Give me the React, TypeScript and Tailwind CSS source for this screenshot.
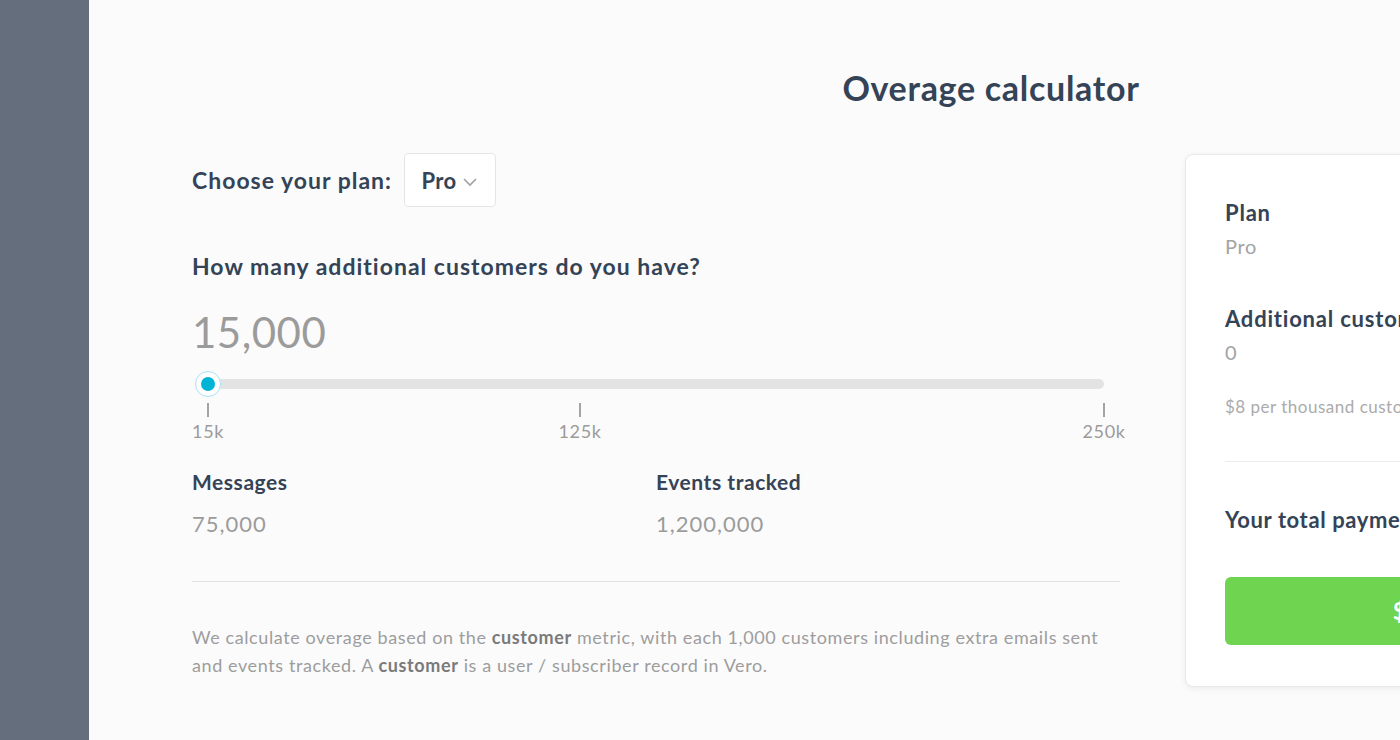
import React from "react";

const font = { fontFamily: "Lato, 'Noto Sans', sans-serif" };

export default function App() {
  return (
    <div className="flex h-[740px] w-[1400px] overflow-hidden bg-[#fbfbfc]" style={font}>
      <div className="w-[89px] shrink-0 bg-[#646e7d]" />
      <div className="flex-1 overflow-hidden pl-[103px]">
        <div className="w-[1598px]">
          <h1 className="pt-[68px] text-center text-[34px] font-bold leading-[40px] tracking-[0.7px] text-[#344356]">
            Overage calculator
          </h1>
          <div className="mt-[45px] flex gap-[65px]">
            <div className="w-[928px] shrink-0">
              <div className="flex items-center gap-[12px]">
                <span className="text-[23px] font-bold tracking-[1px] text-[#344356]">Choose your plan:</span>
                <div className="flex h-[54px] w-[92px] items-center justify-center gap-[6px] rounded-[4px] border border-[#e4e5e7] bg-white">
                  <span className="text-[22px] font-bold tracking-[0.3px] text-[#344356]">Pro</span>
                  <svg width="16" height="10" viewBox="0 0 16 10" className="mt-[4px]">
                    <path d="M2 2 L8 8 L14 2" fill="none" stroke="#a0a0a0" strokeWidth="1.6" />
                  </svg>
                </div>
              </div>
              <div className="mt-[45px] text-[23px] font-bold leading-[28px] tracking-[1px] text-[#344356]">
                How many additional customers do you have?
              </div>
              <div className="mt-[28px] text-[42px] font-normal leading-[48px] tracking-[0.5px] text-[#9b9b9b]">
                15,000
              </div>
              <div className="relative mt-[13px] h-[70px] w-[928px]">
                <div className="absolute left-[6px] top-[10px] h-[10px] w-[906px] rounded-full bg-[#e3e3e3]" />
                <div className="absolute left-[3px] top-[2px] flex h-[26px] w-[26px] items-center justify-center rounded-full border border-[#a9e3ee] bg-white">
                  <div className="h-[14px] w-[14px] rounded-full bg-[#00b4d6]" />
                </div>
                <div className="absolute left-[15px] top-[34px] h-[14px] w-[2px] bg-[#a4a4a4]" />
                <div className="absolute left-[387px] top-[34px] h-[14px] w-[2px] bg-[#a4a4a4]" />
                <div className="absolute left-[911px] top-[34px] h-[14px] w-[2px] bg-[#a4a4a4]" />
                <span className="absolute left-[16px] top-[52px] -translate-x-1/2 text-[18px] leading-[20px] tracking-[0.6px] text-[#9b9b9b]">15k</span>
                <span className="absolute left-[388px] top-[52px] -translate-x-1/2 text-[18px] leading-[20px] tracking-[0.6px] text-[#9b9b9b]">125k</span>
                <span className="absolute left-[912px] top-[52px] -translate-x-1/2 text-[18px] leading-[20px] tracking-[0.6px] text-[#9b9b9b]">250k</span>
              </div>
              <div className="mt-[31px] grid grid-cols-2">
                <div>
                  <div className="text-[21px] font-bold leading-[24px] tracking-[0.55px] text-[#344356]">Messages</div>
                  <div className="mt-[17px] text-[22px] leading-[26px] tracking-[1px] text-[#9b9b9b]">75,000</div>
                </div>
                <div>
                  <div className="text-[21px] font-bold leading-[24px] tracking-[0.55px] text-[#344356]">Events tracked</div>
                  <div className="mt-[17px] text-[22px] leading-[26px] tracking-[1px] text-[#9b9b9b]">1,200,000</div>
                </div>
              </div>
              <div className="mt-[44px] h-px bg-[#e2e2e2]" />
              <p className="mt-[41px] text-[18px] leading-[28px] tracking-[0.6px] text-[#9d9d9d]">
                We calculate overage based on the <b className="font-bold text-[#7a7a7a]">customer</b> metric, with each 1,000 customers including extra emails sent and events tracked. A <b className="font-bold text-[#7a7a7a]">customer</b> is a user / subscriber record in Vero.
              </p>
            </div>
            <div className="mt-[1px] h-[533px] w-[605px] shrink-0 rounded-[8px] border border-[#e8e8ea] bg-white px-[39px] pt-[44px] shadow-[0_2px_6px_rgba(0,0,0,0.06)]">
              <div className="text-[22px] font-bold leading-[28px] tracking-[0.8px] text-[#344356]">Plan</div>
              <div className="mt-[6px] text-[20px] leading-[26px] tracking-[0.6px] text-[#a3a3a3]">Pro</div>
              <div className="mt-[46px] text-[22px] font-bold leading-[28px] tracking-[0.8px] text-[#344356]">Additional customers</div>
              <div className="mt-[6px] text-[20px] leading-[26px] tracking-[0.6px] text-[#a3a3a3]">0</div>
              <div className="mt-[31px] text-[17px] leading-[22px] tracking-[0.5px] text-[#ababab]">$8 per thousand customers</div>
              <div className="mt-[43px] h-px bg-[#ececec]" />
              <div className="mt-[44px] text-[22px] font-bold leading-[28px] tracking-[0.6px] text-[#344356]">Your total payment</div>
              <div className="mt-[43px] flex h-[68px] items-center justify-center rounded-[6px] bg-[#6fd44f] text-[24px] font-bold tracking-[0.8px] text-white">
                $0.00 per month
              </div>
            </div>
          </div>
        </div>
      </div>
    </div>
  );
}
